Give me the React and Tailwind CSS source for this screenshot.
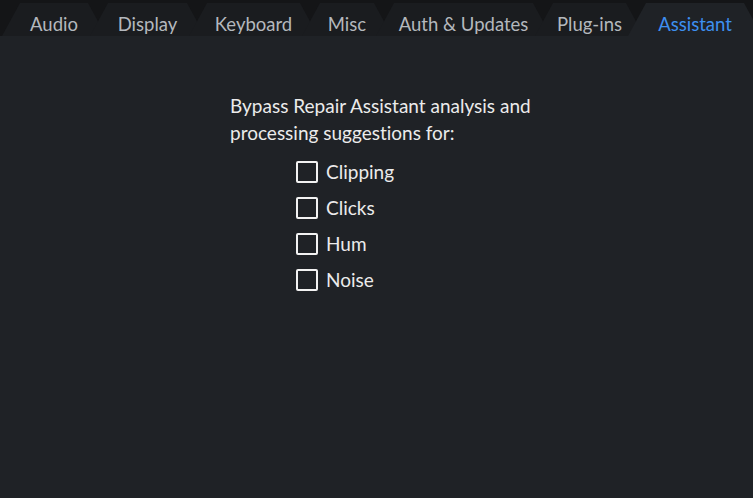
import { useState } from 'react';

const tabs = [
  { label: 'Audio', w: 'w-[104px]' },
  { label: 'Display', w: 'w-[115px]' },
  { label: 'Keyboard', w: 'w-[129px]' },
  { label: 'Misc', w: 'w-[90px]' },
  { label: 'Auth & Updates', w: 'w-[175px]' },
  { label: 'Plug-ins', w: 'w-[109px]' },
  { label: 'Assistant', w: 'w-[134px]' },
];

const options = ['Clipping', 'Clicks', 'Hum', 'Noise'];

export default function App() {
  const [active, setActive] = useState('Assistant');
  const [checked, setChecked] = useState({});

  return (
    <div
      className="w-[753px] h-[498px] overflow-hidden bg-[#1f2226] flex flex-col [font-variant-ligatures:none]"
      style={{ fontFamily: 'Lato, "Noto Sans", sans-serif' }}
    >
      <div className="h-[36px] bg-[#141517] pt-[3px] pl-[2px] flex shrink-0">
        {tabs.map((t, i) => {
          const isActive = t.label === active;
          return (
            <button
              key={t.label}
              onClick={() => setActive(t.label)}
              className={`${t.w} h-[33px] shrink-0 relative flex items-center justify-center pt-[10px] text-[18.5px] [clip-path:polygon(18px_0,calc(100%-18px)_0,100%_100%,0_100%)] ${
                i > 0 ? '-ml-[16px]' : ''
              } ${isActive ? 'bg-[#1f2226] text-[#3d8ff0] z-10' : 'bg-[#1a1c1f] text-[#b4b8bd]'}`}
            >
              <span className="whitespace-nowrap">{t.label}</span>
            </button>
          );
        })}
      </div>

      <div className="pl-[230px] pt-[56px]">
        <p className="text-[19px] leading-[27px] text-[#ebebeb] w-[330px]">
          Bypass Repair Assistant analysis and processing suggestions for:
        </p>
        <div className="pl-[66px] pt-[15px] flex flex-col gap-[14px]">
          {options.map((o) => (
            <label key={o} className="flex items-center gap-[8px] h-[22px] cursor-pointer">
              <span
                onClick={() => setChecked((p) => ({ ...p, [o]: !p[o] }))}
                className="w-[22px] h-[22px] border-2 border-[#f2f2f2] rounded-[2px] flex items-center justify-center"
              >
                {checked[o] && <span className="w-[12px] h-[12px] bg-[#f2f2f2]" />}
              </span>
              <span className="text-[19px] text-[#ebebeb]">{o}</span>
            </label>
          ))}
        </div>
      </div>
    </div>
  );
}
